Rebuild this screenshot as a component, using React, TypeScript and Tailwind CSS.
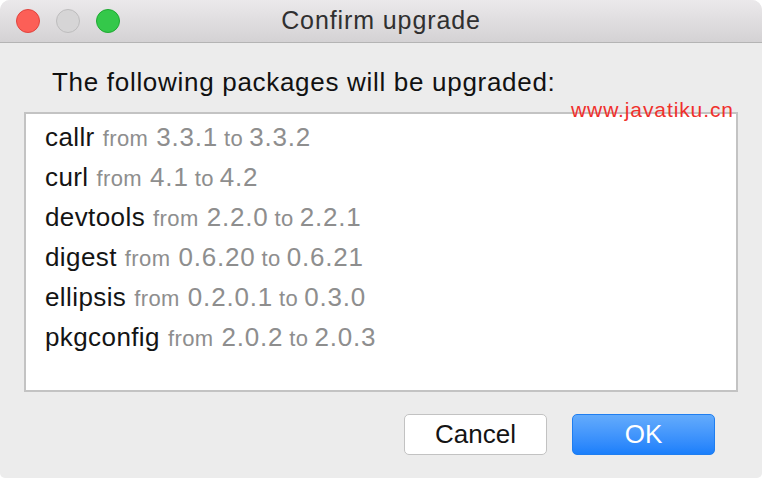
import React from "react";

const packages = [
  { name: "callr", from: "3.3.1", to: "3.3.2" },
  { name: "curl", from: "4.1", to: "4.2" },
  { name: "devtools", from: "2.2.0", to: "2.2.1" },
  { name: "digest", from: "0.6.20", to: "0.6.21" },
  { name: "ellipsis", from: "0.2.0.1", to: "0.3.0" },
  { name: "pkgconfig", from: "2.0.2", to: "2.0.3" },
];

const Light = ({ cls }: { cls: string }) => (
  <div className={"w-[24px] h-[24px] rounded-full border " + cls} />
);

export default function App() {
  return (
    <div className="w-[762px] h-[478px] bg-white font-['Liberation_Sans',Arial,sans-serif]">
      <div className="relative w-full h-full flex flex-col rounded-t-[10px] rounded-b-[5px] overflow-hidden bg-[#ececec]">
        {/* title bar */}
        <div className="relative h-[43px] shrink-0 flex items-center bg-gradient-to-b from-[#ebe9eb] to-[#d4d2d4] border-b border-[#b4b4b4]">
          <div className="flex gap-[16px] pl-[16px]">
            <Light cls="bg-[#fc5f57] border-[#e0443e]" />
            <Light cls="bg-[#d6d5d6] border-[#bdbcbd]" />
            <Light cls="bg-[#34c84a] border-[#1ea932]" />
          </div>
          <div className="absolute inset-0 flex items-center justify-center text-[25px] tracking-[0.9px] text-[#303030]">
            Confirm upgrade
          </div>
        </div>

        {/* body */}
        <div className="flex flex-col pl-[24px] pr-[24px]">
          <div className="pl-[28px] pt-[20px] h-[69px] text-[26px] tracking-[0.7px] text-[#111]">
            The following packages will be upgraded:
          </div>
          <div className="h-[280px] bg-white border-2 border-[#c3c3c3] pl-[19px] pt-[3px]">
            {packages.map((p) => (
              <div key={p.name} className="h-[40px] flex items-baseline leading-[40px] whitespace-nowrap">
                <span className="text-[26px] tracking-[0.4px] text-[#141414]">{p.name}</span>
                <span className="text-[22px] tracking-[0.4px] text-[#8e8e8e] ml-[8px]">from</span>
                <span className="text-[26px] tracking-[0.8px] text-[#8e8e8e] ml-[8px]">{p.from}</span>
                <span className="text-[22px] tracking-[0.4px] text-[#8e8e8e] ml-[6px]">to</span>
                <span className="text-[26px] tracking-[0.8px] text-[#8e8e8e] ml-[6px]">{p.to}</span>
              </div>
            ))}
          </div>
          <div className="flex justify-end gap-[25px] pt-[22px] pr-[23px]">
            <button className="w-[143px] h-[41px] rounded-[5px] bg-white border border-[#c2c2c2] text-[26px] text-[#141414]">
              Cancel
            </button>
            <button className="w-[143px] h-[41px] rounded-[5px] bg-gradient-to-b from-[#63abfc] to-[#1a7ffb] border border-[#1f7ef0] text-[26px] text-white">
              OK
            </button>
          </div>
        </div>

        <div className="absolute left-[571px] top-[99px] leading-none text-[21px] tracking-[0.9px] text-[#f0302c]">
          www.javatiku.cn
        </div>
      </div>
    </div>
  );
}
